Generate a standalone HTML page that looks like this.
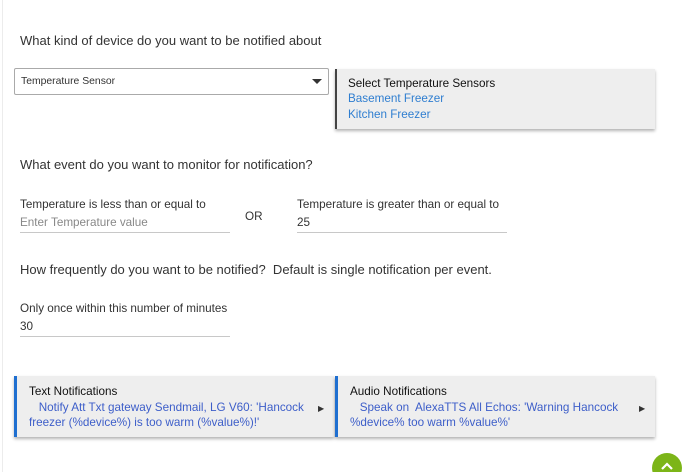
<!DOCTYPE html>
<html><head><meta charset="utf-8"><style>
*{margin:0;padding:0;box-sizing:border-box}
html{width:690px;height:472px;overflow:hidden}
body{width:690px;height:472px;overflow:hidden;background:#fff;font-family:"Liberation Sans",Arial,sans-serif;color:#222;position:relative}
.a{position:absolute;white-space:nowrap}
.h{font-size:13px;color:#333}
.lbl{font-size:11.7px;color:#333}
.ul{position:absolute;height:1px;background:#c8c8c8}
.card{position:absolute;background:#eeeeee;box-shadow:0 2px 3px rgba(0,0,0,.3)}
.link{color:#2f7ed0}
.nl{color:#3d5ec9}
</style></head><body>
<div class="a" style="left:2px;top:0;width:1px;height:472px;background:#ececec"></div>
<div class="a h" style="left:20px;top:33px">What kind of device do you want to be notified about</div>
<div class="a" style="left:14px;top:68px;width:315px;height:27px;border:1px solid #aaa;border-radius:2px;font-size:10.4px;color:#333;padding:7px 0 0 6px">Temperature Sensor
<div style="position:absolute;right:6px;top:10px;width:0;height:0;border-left:5px solid transparent;border-right:5px solid transparent;border-top:5px solid #333"></div></div>
<div class="card" style="left:335px;top:69px;width:320px;height:60px;border-left:2px solid #444"></div>
<div class="a" style="left:348px;top:77px;font-size:11.7px;color:#111">Select Temperature Sensors</div>
<div class="a link" style="left:348px;top:92px;font-size:11.7px">Basement Freezer</div>
<div class="a link" style="left:348px;top:108px;font-size:11.7px">Kitchen Freezer</div>
<div class="a h" style="left:20px;top:157px">What event do you want to monitor for notification?</div>
<div class="a lbl" style="left:20px;top:198px">Temperature is less than or equal to</div>
<div class="a" style="left:20px;top:216px;font-size:11.7px;color:#888">Enter Temperature value</div>
<div class="ul" style="left:20px;top:232px;width:210px"></div>
<div class="a lbl" style="left:245px;top:210px">OR</div>
<div class="a lbl" style="left:297px;top:198px">Temperature is greater than or equal to</div>
<div class="a lbl" style="left:297px;top:216px">25</div>
<div class="ul" style="left:297px;top:232px;width:210px"></div>
<div class="a h" style="left:20px;top:262px">How frequently do you want to be notified?&nbsp; Default is single notification per event.</div>
<div class="a lbl" style="left:20px;top:302px">Only once within this number of minutes</div>
<div class="a lbl" style="left:20px;top:320px">30</div>
<div class="ul" style="left:20px;top:336px;width:210px"></div>
<div class="card" style="left:14px;top:376px;width:320px;height:61px;border-left:3px solid #1f6fd0"></div>
<div class="a" style="left:29px;top:385px;font-size:11.7px;color:#111">Text Notifications</div>
<div class="a nl" style="left:29px;top:400px;font-size:11.7px;line-height:15px">&nbsp;&nbsp;&nbsp;Notify Att Txt gateway Sendmail, LG V60: 'Hancock<br>freezer (%device%) is too warm (%value%)!'</div>
<div class="a" style="left:318px;top:404px;font-size:8px;color:#333">&#9654;</div>
<div class="card" style="left:335px;top:376px;width:320px;height:61px;border-left:3px solid #1f6fd0"></div>
<div class="a" style="left:350px;top:385px;font-size:11.7px;color:#111">Audio Notifications</div>
<div class="a nl" style="left:350px;top:400px;font-size:11.7px;line-height:15px">&nbsp;&nbsp;&nbsp;Speak on&nbsp; AlexaTTS All Echos: 'Warning Hancock<br>%device% too warm %value%'</div>
<div class="a" style="left:639px;top:404px;font-size:8px;color:#333">&#9654;</div>
<div class="a" style="left:652px;top:453px;width:30px;height:30px;border-radius:50%;background:#7cb518"></div>
<svg class="a" style="left:660px;top:461px" width="14" height="10" viewBox="0 0 14 10"><path d="M2 8 L7 3 L12 8" stroke="#fff" stroke-width="2.2" fill="none"/></svg>
</body></html>
